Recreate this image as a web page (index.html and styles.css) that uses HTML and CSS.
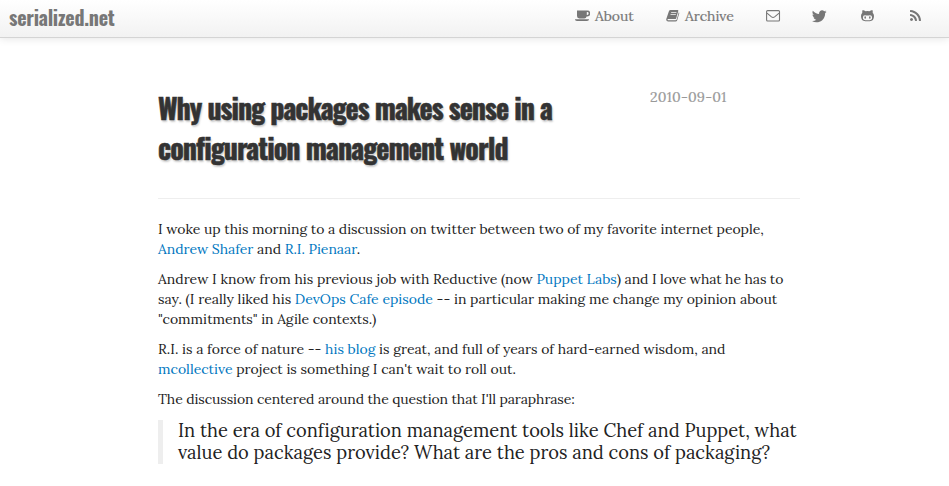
FILE: index.html
```
<!DOCTYPE html>
<html lang="en">
<head>
<meta charset="utf-8">
<title>Why using packages makes sense in a configuration management world</title>
<link rel="stylesheet" href="styles.css">
</head>
<body>
<header class="navbar">
  <a class="brand">serialized.net</a>
  <nav class="nav">
    <a class="item about"><svg class="icon" viewBox="0 0 15 14"><path fill-rule="evenodd" d="M2 1.500H12.300A2.900 2.900 0 0 1 12.300 7.400H11.600A2.500 2.500 0 0 1 9.300 9.400H4.300A2.400 2.400 0 0 1 2 7ZM11.800 3V5.900H12.200A1.450 1.450 0 0 0 12.200 3ZM0 10.300H14C14 11.400 13.200 12 12 12H2C.8 12 0 11.400 0 10.300Z"/></svg>About</a>
    <a class="item archive"><svg class="icon" viewBox="0 0 15 14"><path fill-rule="evenodd" d="M4.600 1H11.600Q12.600 1 12.300 2.100L10.200 9.200Q9.900 10.100 9 10.100H2.200Q1.400 10.100 1.500 10.800Q1.600 11.300 2.400 11.300H9.500Q10.400 11.300 10.700 10.500L12.800 3.200Q13.500 3.600 13.200 4.400L11.200 11.200Q10.800 12.600 9.400 12.600H2.200Q.2 12.600.2 10.600Q.2 9.800.8 8.400L2.800 2.400Q3.300 1 4.600 1ZM5.300 3.200L5 4.100H10.300L10.600 3.200ZM4.700 5.200L4.400 6.100H9.700L10 5.200Z"/></svg>Archive</a>
    <a class="item mail"><svg class="icon" viewBox="0 0 15 14"><g fill="none" stroke="#777" stroke-width="1.1"><rect x=".6" y="1.600" width="12.900" height="10.400" rx="1"/><path d="M1 4.200L5.500 7.900Q7.050 9 8.600 7.900L13.100 4.200"/></g></svg></a>
    <a class="item twitter"><svg class="icon" viewBox="60 120 1600 1493"><path d="M1620 408q-67 98-162 167 1 14 1 42 0 130-38 259.500t-115.500 248.500-184.500 210.500-258 146-323 54.500q-271 0-496-145 35 4 78 4 225 0 401-138-105-2-188-64.500t-114-159.500q33 5 61 5 43 0 85-11-112-23-185.500-111.500t-73.500-205.500v-4q68 38 146 41-66-44-105-115t-39-154q0-88 44-163 121 149 294.500 238.500t371.500 99.500q-8-38-8-74 0-134 94.500-228.500t228.500-94.500q140 0 236 102 109-21 205-78-37 115-142 178 93-10 186-50z"/></svg></a>
    <a class="item github"><svg class="icon" viewBox="0 0 15 14"><path fill-rule="evenodd" d="M1.600 1Q3.300 1.200 4.600 2.300Q6.500 1.900 8.400 2.300Q9.700 1.200 11.400 1Q12 2.400 11.700 3.800Q13 5.100 13 7Q13 12.200 8.700 12.200H4.300Q0 12.200 0 7Q0 5.100 1.300 3.800Q1 2.400 1.600 1ZM4 6.300Q1.900 6.300 1.900 8.500Q1.900 11.200 4.600 11.200H8.400Q11.100 11.200 11.100 8.500Q11.100 6.300 9 6.300Q6.500 6.700 4 6.300Z"/><ellipse cx="4.200" cy="8.500" rx=".8" ry="1.200"/><ellipse cx="8.800" cy="8.500" rx=".8" ry="1.200"/></svg></a>
    <a class="item rss"><svg class="icon" viewBox="192 0 1920 1792"><path d="M576 1344q0 80-56 136t-136 56-136-56-56-136 56-136 136-56 136 56 56 136zm512 123q2 28-17 48-18 21-47 21h-135q-25 0-43-16.500t-20-41.500q-22-229-184.500-391.500t-391.500-184.500q-25-2-41.500-20t-16.500-43v-135q0-29 21-47 17-17 43-17h5q160 13 306 80.500t259 181.500q114 113 181.500 259t80.500 306zm512 2q2 27-18 47-18 20-46 20h-143q-26 0-44.500-17.500t-19.500-42.500q-12-215-101-408.500t-231.500-336-336-231.500-408.500-102q-25-1-42.500-19.500t-17.500-43.500v-143q0-28 20-46 18-18 44-18h3q262 13 501.500 120t425.500 294q187 186 294 425.500t120 501.500z"/></svg></a>
  </nav>
</header>
<main class="container">
  <div class="heading">
    <h1 class="title">Why using packages makes sense in a<br><span class="second">configuration management world</span></h1>
    <time class="date">2010-09-01</time>
  </div>
  <hr class="rule">
  <p>I woke up this morning to a discussion on twitter between two of my favorite internet people,<br><a>Andrew Shafer</a> and <a>R.I. Pienaar</a>.</p>
  <p><span class="wide">Andrew I know from his previous job with Reductive (now <a>Puppet Labs</a></span><span class="tight">) and I love what he has to</span><br><span class="wide">say. (I really liked his <a>DevOps Cafe episode</a> -- in particular making me change my opinion about</span><br>"commitments" in Agile contexts.)</p>
  <p class="wide">R.I. is a force of nature -- <a>his blog</a> is great, and full of years of hard-earned wisdom, and<br><a>mcollective</a> project is something I can't wait to roll out.</p>
  <p class="tight">The discussion centered around the question that I'll paraphrase:</p>
  <blockquote class="quote">In the era of configuration management tools like Chef and Puppet, what<br>value do packages provide? What are the pros and cons of packaging?</blockquote>
</main>
</body>
</html>
```
FILE: styles.css
```
* { box-sizing: border-box; }
body {
  margin: 0;
  height: 486px;
  overflow: hidden;
  background: #fff;
  color: #222;
  font: 14px/20px Lora, "Liberation Serif", serif;
  letter-spacing: -0.04px;
  white-space: nowrap;
}
.navbar {
  display: flex;
  justify-content: space-between;
  height: 38px;
  padding: 0 9px;
  background: linear-gradient(#fff, #f2f2f2);
  border-bottom: 1px solid #d4d4d4;
  box-shadow: 0 1px 8px rgba(0, 0, 0, .1);
  color: #777;
}
.brand {
  font: 700 20px/35px Oswald, "Open Sans Condensed", sans-serif;
  letter-spacing: -0.28px;
}
.nav { display: flex; line-height: 32px; -webkit-text-stroke: .2px #777; }
.item { display: flex; align-items: center; height: 32px; }
.icon { width: 15px; height: 14px; margin-right: 5px; fill: #777; }
.about { width: 91px; }
.archive { width: 100px; }
.archive .icon { margin-right: 4px; }
.mail { width: 46px; }
.twitter { width: 49px; }
.github { width: 49px; }
.rss { width: 30px; }
.container { width: 642px; margin: 50px 0 0 158px; }
.heading { display: flex; height: 110px; }
.title {
  width: 492px;
  margin: 0;
  color: #333;
  font: 700 28px/40px Oswald, "Open Sans Condensed", sans-serif;
  letter-spacing: -1px;
  text-shadow: 1px 2px 2px #ccc;
  -webkit-text-stroke: .5px #333;
}
.second { letter-spacing: -0.91px; }
.date { color: #999; line-height: 18px; letter-spacing: .22px; -webkit-text-stroke: .2px #999; }
.rule { height: 1px; margin: 0 0 20px; border: 0; background: #eee; }
p { margin: 0 0 10px; }
p a { color: #0077bf; }
.wide { letter-spacing: 0; }
.tight { letter-spacing: -0.1px; }
.quote {
  margin: 11px 0 0;
  padding-left: 15px;
  border-left: 5px solid #eee;
  font-size: 18.3px;
  line-height: 22px;
  letter-spacing: 0.01px;
}
```
